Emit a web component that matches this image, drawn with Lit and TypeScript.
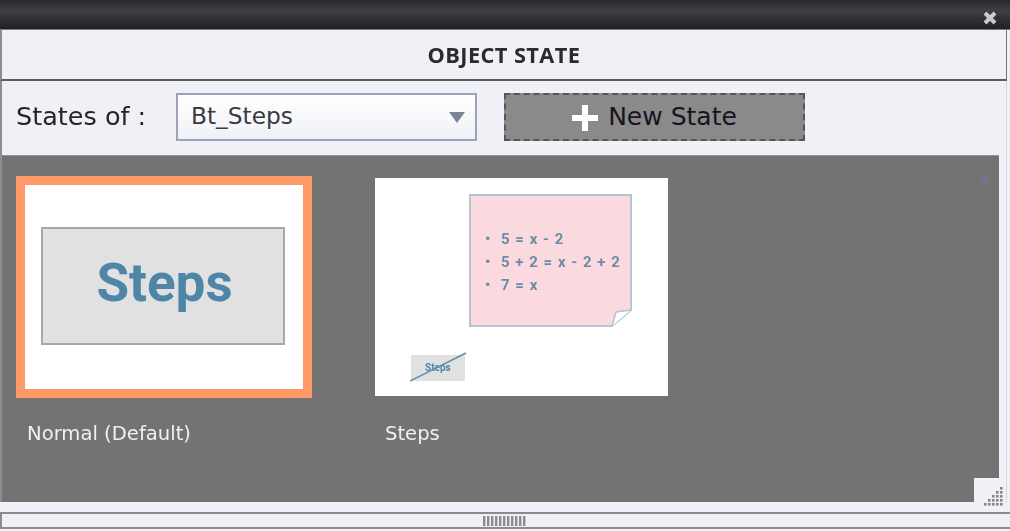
import { LitElement, css, html, svg } from "lit";
import { customElement } from "lit/decorators.js";

const gripDots = [
  [4, 0],
  [3, 1], [4, 1],
  [2, 2], [3, 2], [4, 2],
  [1, 3], [2, 3], [3, 3], [4, 3],
  [0, 4], [1, 4], [2, 4], [3, 4], [4, 4],
];

/**
 * Object state panel
 */
@customElement("app-root")
export class AppRoot extends LitElement {
  static styles = css`
    :host {
      display: flex;
      flex-direction: column;
      width: 1010px;
      height: 531px;
      overflow: hidden;
      background: #f0f1f6;
      font-family: "DejaVu Sans", Tahoma, sans-serif;
      color: #26252c;
    }
    .titlebar {
      flex: none;
      display: flex;
      justify-content: flex-end;
      align-items: center;
      height: 30px;
      padding: 6px 12px 0 0;
      box-sizing: border-box;
      background: linear-gradient(#26272b 0, #3d3f44 35%, #2e2f33 70%, #1f2023 100%);
      border-bottom: 1px solid #77787c;
    }
    .close {
      display: block;
      filter: blur(0.4px);
    }
    .heading {
      flex: none;
      height: 51px;
      display: flex;
      align-items: center;
      justify-content: center;
      box-sizing: border-box;
      margin-right: 3px;
      border-left: 2px solid #8c8d91;
      border-right: 1px solid #77787c;
      border-bottom: 2px solid #5c5d61;
      font-family: "Open Sans", sans-serif;
      font-size: 21.8px;
      font-weight: 700;
      letter-spacing: 0.4px;
      color: #2a2a30;
      filter: blur(0.3px);
    }
    .body {
      flex: none;
      height: 421px;
      display: flex;
      flex-direction: column;
      box-sizing: border-box;
      border-left: 2px solid #8c8d91;
      margin-right: 3px;
      border-right: 1px solid #d8d9de;
    }
    .toolbar {
      flex: none;
      height: 74px;
      display: flex;
      align-items: center;
      padding: 0 0 3px 14px;
      box-sizing: border-box;
    }
    .label {
      width: 160px;
      margin-top: -2px;
      font-size: 25.5px;
      white-space: nowrap;
      filter: blur(0.3px);
    }
    .select {
      width: 301px;
      height: 48px;
      box-sizing: border-box;
      display: flex;
      align-items: center;
      justify-content: space-between;
      padding: 0 10px 2px 13px;
      border: 2px solid #9ea2b8;
      background: linear-gradient(#ffffff, #f0f1f6);
      font-size: 23.3px;
      color: #3a3a44;
    }
    .arrow {
      width: 0;
      height: 0;
      margin-top: 4px;
      border-left: 8.5px solid transparent;
      border-right: 8.5px solid transparent;
      border-top: 11px solid #7d8398;
    }
    .new-state {
      margin-left: 27px;
      width: 301px;
      height: 48px;
      box-sizing: border-box;
      display: flex;
      align-items: center;
      justify-content: center;
      gap: 10px;
      background: #8a8a8a;
      border: 2px dashed #55565a;
      font-size: 25px;
      color: #17141f;
    }
    .plus {
      display: block;
      margin-top: 2px;
    }
    .gallery {
      position: relative;
      flex: none;
      height: 347px;
      width: 997px;
      box-sizing: border-box;
      display: flex;
      align-items: flex-start;
      gap: 63px;
      padding: 20px 0 0 14px;
      background: #737373;
      border-top: 1px solid #8f9094;
    }
    .state {
      display: flex;
      flex-direction: column;
    }
    .thumb {
      position: relative;
      box-sizing: border-box;
      background: #fff;
      filter: blur(0.6px);
    }
    .thumb.active {
      width: 296px;
      height: 222px;
      border: 9px solid #ff9a66;
      display: flex;
      align-items: center;
      justify-content: center;
    }
    .thumb.plain {
      width: 293px;
      height: 218px;
      margin-top: 2px;
    }
    .preview-button {
      width: 244px;
      height: 118px;
      box-sizing: border-box;
      margin: -2px 0 0 -2px;
      padding: 0 0 7px 3px;
      display: flex;
      align-items: center;
      justify-content: center;
      background: #e1e1e1;
      border: 2px solid #a8a8a8;
      font-family: Roboto, sans-serif;
      font-size: 53px;
      font-weight: 700;
      color: #4f86a8;
    }
    .note {
      position: absolute;
      left: 94px;
      top: 16px;
      width: 164px;
      height: 133px;
      display: block;
    }
    .note-text {
      font-family: Roboto, sans-serif;
      font-size: 15px;
      font-weight: 700;
      fill: #6b8ba6;
      letter-spacing: 1px;
    }
    .mini {
      position: absolute;
      left: 35px;
      top: 174px;
      width: 57px;
      height: 30px;
      display: block;
    }
    .mini-text {
      font-family: Roboto, sans-serif;
      font-size: 10px;
      font-weight: 700;
      fill: #4f86a8;
    }
    .caption {
      font-size: 19.6px;
      color: #eef0f5;
      white-space: nowrap;
      filter: blur(0.3px);
    }
    .state:first-child .caption {
      margin: 24px 0 0 11px;
    }
    .state:nth-child(2) .caption {
      margin: 26px 0 0 10px;
    }
    .scroll-up {
      position: absolute;
      right: 7px;
      top: 18px;
      width: 0;
      height: 0;
      border-left: 7px solid transparent;
      border-right: 7px solid transparent;
      border-bottom: 8px solid #6f7591;
    }
    .corner {
      position: absolute;
      right: 0;
      bottom: 0;
      width: 25px;
      height: 24px;
      background: #f0f1f6;
    }
    .grip {
      position: absolute;
      left: 984px;
      top: 487px;
      display: block;
      overflow: visible;
    }
    .footer {
      flex: none;
      height: 13px;
      border-top: 2px solid #8a8b8f;
      margin-top: 10px;
      display: flex;
      justify-content: center;
      align-items: center;
      border-left: 2px solid #8c8d91;
      box-sizing: content-box;
      border-bottom: 2px solid #8a8b8f;
    }
    .handle {
      display: block;
    }
  `;

  render() {
    return html`
      <div class="titlebar">
        <svg class="close" width="16" height="16" viewBox="0 0 16 16">
          <path d="M3 3 L13 13 M13 3 L3 13" stroke="#c9cacd" stroke-width="4" />
        </svg>
      </div>
      <div class="heading">OBJECT STATE</div>
      <div class="body">
        <div class="toolbar">
          <div class="label">States of :</div>
          <div class="select">
            <span>Bt_Steps</span>
            <span class="arrow"></span>
          </div>
          <div class="new-state">
            <svg class="plus" width="26" height="26" viewBox="0 0 26 26">
              <path d="M10 0 H16 V10 H26 V16 H16 V26 H10 V16 H0 V10 H10 Z" fill="#fff" />
            </svg>
            <span>New State</span>
          </div>
        </div>
        <div class="gallery">
          <div class="state">
            <div class="thumb active">
              <div class="preview-button">Steps</div>
            </div>
            <div class="caption">Normal (Default)</div>
          </div>
          <div class="state">
            <div class="thumb plain">
              <svg class="note" viewBox="0 0 164 133">
                <path
                  d="M1 1 H162 V116 L143 132 H1 Z"
                  fill="#fadadf"
                  stroke="#b5c3d6"
                  stroke-width="2"
                />
                <path d="M143 132 L147 118 L162 116" fill="#fff" stroke="#b5c3d6" stroke-width="1.5" />
                <text class="note-text" x="16" y="50">•</text>
                <text class="note-text" x="32" y="50">5 = x - 2</text>
                <text class="note-text" x="16" y="73">•</text>
                <text class="note-text" x="32" y="73">5 + 2 = x - 2 + 2</text>
                <text class="note-text" x="16" y="96">•</text>
                <text class="note-text" x="32" y="96">7 = x</text>
              </svg>
              <svg class="mini" viewBox="0 0 57 30">
                <rect x="1" y="3" width="54" height="26" fill="#e1e1e1" />
                <text class="mini-text" x="15" y="19">Steps</text>
                <path d="M0 29 L56 1" stroke="#5d92ae" stroke-width="1.5" />
              </svg>
            </div>
            <div class="caption">Steps</div>
          </div>
          <div class="scroll-up"></div>
          <div class="corner"></div>
        </div>
      </div>
      <div class="footer">
        <svg class="handle" width="46" height="10" viewBox="0 0 46 10">
          ${Array.from(
            { length: 11 },
            (_, i) => svg`<rect x=${i * 4} y="0" width="2.4" height="10" fill="#8a8b92" />`
          )}
        </svg>
      </div>
      <svg class="grip" width="20" height="20" viewBox="0 0 20 20">
        ${gripDots.map(
          ([x, y]) => svg`<rect x=${x * 4} y=${y * 4} width="2.6" height="2.6" fill="#85868c" />`
        )}
      </svg>
    `;
  }
}
